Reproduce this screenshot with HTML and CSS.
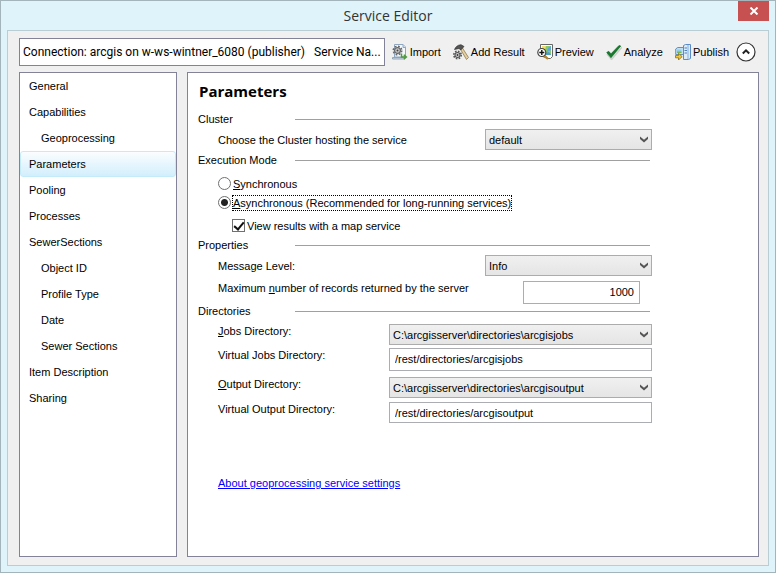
FILE: index.html
```html
<!DOCTYPE html>
<html lang="en">
<head>
    <meta charset="UTF-8">
    <meta name="viewport" content="width=device-width, initial-scale=1.0">
    <title>Service Editor</title>
    <link rel="stylesheet" href="styles.css">
</head>
<body>
    <!-- shared arrow for the drop-downs -->
    <svg class="defs" width="0" height="0" aria-hidden="true">
        <symbol id="arrow" viewBox="0 0 8 7">
            <path d="M0 0.500v2.500L4 6.500l4-3.500V0.500L4 3.800z" fill="#555"/>
        </symbol>
    </svg>

    <div class="window">
        <header class="titlebar">
            <h1>Service Editor</h1>
            <button class="close" aria-label="Close">
                <svg width="10" height="8" viewBox="0 0 10 8"><path d="M1.5 0.5l7 7M8.5 0.5l-7 7" stroke="#fff" stroke-width="2"/></svg>
            </button>
        </header>

        <div class="client">
            <div class="toolbar">
                <div class="connection">
                    <span>Connection: arcgis on w-ws-wintner_6080 (publisher)</span>
                    <span>Service Na...</span>
                </div>
                <button class="tool">
                    <svg width="16" height="16" viewBox="0 0 16 16">
                        <path d="M2.500 0.500h8.500l2.500 2.500v10h-11z" fill="#f4f8fc" stroke="#8ea6c0"/>
                        <path d="M11 0.500v3h2.500" fill="#cfe0f0" stroke="#8ea6c0"/>
                        <path d="M0.500 13.500h12v1.500h-12z" fill="#cfdcea" stroke="#8595a8" stroke-width=".8"/>
                        <circle cx="5.500" cy="6.500" r="4.200" fill="none" stroke="#666" stroke-width="1.600" stroke-dasharray="1.800 1.500"/>
                        <circle cx="5.500" cy="6.500" r="2.900" fill="#ccc" stroke="#666" stroke-width="1.200"/>
                        <circle cx="5.500" cy="6.500" r="1" fill="#444"/>
                        <path d="M9.500 9.500v3.500h4M11.800 10.800l2.600 2.200-2.600 2.300" fill="none" stroke="#4f9a3c" stroke-width="1.500"/>
                    </svg>
                    Import
                </button>
                <button class="tool">
                    <svg width="16" height="16" viewBox="0 0 16 16">
                        <path d="M7 4.500l1.800-1.500 6.700 10.500-2 2z" fill="#e6cfa0" stroke="#8f7a50" stroke-width=".8"/>
                        <path d="M1.500 5.500C2.500 3 4.500 1 8 0.700l3 1.800-3.200 3.500-1.800-1.500z" fill="#555" stroke="#222" stroke-width=".6"/>
                        <circle cx="4.500" cy="11" r="3.700" fill="none" stroke="#555" stroke-width="1.600" stroke-dasharray="1.600 1.300"/>
                        <circle cx="4.500" cy="11" r="2.500" fill="#ccc" stroke="#555" stroke-width="1.100"/>
                        <circle cx="4.500" cy="11" r=".9" fill="#333"/>
                    </svg>
                    Add Result
                </button>
                <button class="tool">
                    <svg width="16" height="16" viewBox="0 0 16 16">
                        <path d="M3.500 0.500h12v12l-2 2h-3l-7-3z" fill="#fff" stroke="#666"/>
                        <path d="M5 2h9v9H5z" fill="#8cc96b"/>
                        <path d="M5 2h4l-1 4-3 1z" fill="#f0df70"/>
                        <path d="M14 2v4l-4 2 1-4z" fill="#5fa6dc"/>
                        <path d="M8 9l4-1 2 3H9z" fill="#4c9cc9"/>
                        <path d="M7.500 11.500l3.500 3.500" stroke="#b5842e" stroke-width="2.200"/>
                        <circle cx="4.800" cy="8.500" r="4" fill="#fff" stroke="#444" stroke-width="1.200"/>
                        <path d="M4.800 6v5M2.300 8.500h5" stroke="#111" stroke-width="1.400"/>
                    </svg>
                    Preview
                </button>
                <button class="tool">
                    <svg width="16" height="16" viewBox="0 0 16 16">
                        <path d="M1 10l4.500 5.500L16 3" fill="none" stroke="#c9cfc9" stroke-width="1.500"/>
                        <path d="M0.700 8.500l2-1.200 2.300 2.500L13 1.500 14.800 2 5 13.800z" fill="#157a2b" stroke="#0e6321" stroke-width=".6"/>
                    </svg>
                    Analyze
                </button>
                <button class="tool">
                    <svg width="16" height="16" viewBox="0 0 16 16">
                        <path d="M0.700 5l2-1.500h5.800v7H0.700z" fill="#bfe0f5" stroke="#5787b5" stroke-width=".9"/>
                        <path d="M2 5.500h4.500v3.500H2z" fill="#8fd0e8"/>
                        <path d="M2 7.500h4.500v1.500H2z" fill="#79b84e"/>
                        <path d="M8.500 1.500l2-1h5v14l-2 1h-5z" fill="#dcebfa" stroke="#5b8cc5"/>
                        <path d="M13 1v14" stroke="#84aee0"/>
                        <path d="M9.500 4h2.500M9.500 6.500h2.500M9.500 9h2.500" stroke="#4c7fb8"/>
                        <path d="M0.500 11.500h3V9.300l3.700 3.300L3.500 16v-2.200h-3z" fill="#f1c83c" stroke="#8a6d14" stroke-width=".8"/>
                    </svg>
                    Publish
                </button>
                <button class="collapse" aria-label="Collapse">
                    <svg width="20" height="20" viewBox="0 0 20 20">
                        <circle cx="10" cy="10" r="9" fill="#fff" stroke="#333" stroke-width="1.200"/>
                        <path d="M6.800 11.500L10 8.300l3.200 3.200" fill="none" stroke="#222" stroke-width="2"/>
                    </svg>
                </button>
            </div>

            <div class="content">
                <nav class="sidebar">
                    <a href="#">General</a>
                    <a href="#">Capabilities</a>
                    <a href="#" class="sub">Geoprocessing</a>
                    <a href="#" class="active">Parameters</a>
                    <a href="#">Pooling</a>
                    <a href="#">Processes</a>
                    <a href="#">SewerSections</a>
                    <a href="#" class="sub">Object ID</a>
                    <a href="#" class="sub">Profile Type</a>
                    <a href="#" class="sub">Date</a>
                    <a href="#" class="sub">Sewer Sections</a>
                    <a href="#">Item Description</a>
                    <a href="#">Sharing</a>
                </nav>

                <main class="panel">
                    <h2>Parameters</h2>
                    <form class="form">
                        <h3>Cluster</h3>
                        <div class="row center">
                            <label for="cluster">Choose the Cluster hosting the service</label>
                            <span class="select">
                                <select id="cluster"><option>default</option></select>
                                <svg width="8" height="7"><use href="#arrow"/></svg>
                            </span>
                        </div>

                        <h3>Execution Mode</h3>
                        <div class="modes">
                            <label class="check"><input type="radio" name="mode"><span><u>S</u>ynchronous</span></label>
                            <label class="check"><input type="radio" name="mode" checked><span class="focused"><u>A</u>synchronous (Recommended for long-running services)</span></label>
                            <label class="check nested"><input type="checkbox" checked><span>View results with a map service</span></label>
                        </div>

                        <h3>Properties</h3>
                        <div class="row center">
                            <label for="level">Message Level:</label>
                            <span class="select">
                                <select id="level"><option>Info</option></select>
                                <svg width="8" height="7"><use href="#arrow"/></svg>
                            </span>
                        </div>
                        <div class="row records">
                            <label for="max">Maximum <u>n</u>umber of records returned by the server</label>
                            <input type="text" id="max" class="number" value="1000">
                        </div>

                        <h3 class="tight">Directories</h3>
                        <div class="row">
                            <label for="jobs"><u>J</u>obs Directory:</label>
                            <span class="select wide">
                                <select id="jobs"><option>C:\arcgisserver\directories\arcgisjobs</option></select>
                                <svg width="8" height="7"><use href="#arrow"/></svg>
                            </span>
                        </div>
                        <div class="row">
                            <label for="vjobs">Virtual Jobs Directory:</label>
                            <input type="text" id="vjobs" class="wide" value="/rest/directories/arcgisjobs">
                        </div>
                        <div class="row output">
                            <label for="output"><u>O</u>utput Directory:</label>
                            <span class="select wide">
                                <select id="output"><option>C:\arcgisserver\directories\arcgisoutput</option></select>
                                <svg width="8" height="7"><use href="#arrow"/></svg>
                            </span>
                        </div>
                        <div class="row">
                            <label for="voutput">Virtual Output Directory:</label>
                            <input type="text" id="voutput" class="wide short" value="/rest/directories/arcgisoutput">
                        </div>

                        <a href="#" class="about">About geoprocessing service settings</a>
                    </form>
                </main>
            </div>
        </div>
    </div>
</body>
</html>
```
FILE: styles.css
```css
* {
    box-sizing: border-box;
}

body {
    margin: 0;
    font-family: "Liberation Sans", Arial, sans-serif;
    font-size: 11px;
    line-height: 14px;
    color: #000;
}

button, input, select {
    font: inherit;
    color: inherit;
    margin: 0;
}

.defs {
    position: absolute;
}

/* window frame */
.window {
    display: flex;
    flex-direction: column;
    min-height: 100vh;
    padding: 0 6px 6px;
    background: #dff3fa;
    border: 1px solid #a3b5bb;
}

.titlebar {
    display: grid;
    grid-template-columns: 1fr auto 1fr;
    align-items: center;
    height: 29px;
}

.titlebar h1 {
    grid-column: 2;
    margin: 0;
    font-family: "Open Sans", sans-serif;
    font-size: 14px;
    font-weight: normal;
    line-height: 20px;
    color: #333;
}

.close {
    justify-self: end;
    align-self: start;
    display: flex;
    align-items: center;
    justify-content: center;
    width: 31px;
    height: 20px;
    padding: 0;
    border: none;
    background: #c75050;
}

.client {
    flex: 1;
    display: flex;
    flex-direction: column;
    gap: 6px;
    padding: 7px 9px 8px 11px;
    background: #f0f0f0;
    border: 1px solid #b9ced4;
}

/* toolbar */
.toolbar {
    display: flex;
    align-items: center;
    gap: 12px;
    margin-right: 3px;
}

.connection {
    flex: 1;
    display: flex;
    gap: 9px;
    min-width: 0;
    margin-right: -5px;
    padding: 0 3px;
    font-family: Roboto, sans-serif;
    font-size: 12px;
    line-height: 26px;
    white-space: nowrap;
    background: #fff;
    border: 1px solid #828399;
}

.tool {
    display: flex;
    align-items: center;
    gap: 2px;
    padding: 0;
    border: none;
    background: none;
    white-space: nowrap;
}

.collapse {
    display: flex;
    padding: 0;
    margin-left: -5px;
    border: none;
    background: none;
}

/* panels */
.content {
    flex: 1;
    display: flex;
    gap: 10px;
}

.sidebar {
    width: 158px;
    background: #fff;
    border: 1px solid #828399;
}

.sidebar a {
    display: block;
    padding-left: 8px;
    line-height: 24px;
    color: #000;
    text-decoration: none;
    border: 1px solid transparent;
}

.sidebar .sub {
    padding-left: 20px;
}

.sidebar .active {
    background: linear-gradient(#fbfdff, #d2effc);
    border-color: #c4ebfa;
    border-radius: 3px;
}

.panel {
    flex: 1;
    padding: 8px 10px;
    background: #fff;
    border: 1px solid #828399;
}

.panel h2 {
    margin: 0 0 11px 1px;
    font-family: "Open Sans", sans-serif;
    font-size: 15px;
    line-height: 20px;
}

.form {
    max-width: 454px;
}

/* section titles with a rule to the right */
.form h3 {
    display: grid;
    grid-template-columns: 97px 1fr;
    align-items: center;
    margin: 3px 2px 3px 0;
    font-size: 11px;
    font-weight: normal;
}

.form h3::after {
    content: "";
    border-top: 1px solid #a0a0a0;
}

.form .tight {
    margin: 0 2px 6px 0;
}

.row {
    display: flex;
    justify-content: space-between;
    margin: 0 0 3px 20px;
}

.center {
    align-items: center;
}

.records {
    margin: 5px 12px 0 20px;
}

.output {
    margin: 6px 0 4px 20px;
}

.select {
    position: relative;
    width: 167px;
}

.select select {
    display: block;
    appearance: none;
    width: 100%;
    height: 21px;
    padding: 0 3px;
    border: 1px solid #acacac;
    border-radius: 0;
    background: linear-gradient(#f0f0f0, #e5e5e5);
}

.select svg {
    position: absolute;
    right: 4px;
    top: 7px;
    pointer-events: none;
}

.row input {
    height: 23px;
    padding: 0 5px 2px;
    border: 1px solid #abadb3;
    background: #fff;
}

.row .number {
    width: 117px;
    text-align: right;
}

.row .wide {
    width: 263px;
}

.row .short {
    height: 21px;
    padding-bottom: 0;
}

.modes {
    padding: 4px 0 0 20px;
}

.check {
    display: flex;
    align-items: center;
    gap: 2px;
    height: 19px;
}

.nested {
    margin: 4px 0 0 14px;
}

.check input {
    appearance: none;
    width: 13px;
    height: 13px;
    border: 1px solid #707070;
    background: #fff;
}

.check input[type="radio"] {
    border-radius: 50%;
}

.check input[type="radio"]:checked {
    background: radial-gradient(#222 0 3px, #fff 4px);
}

.check input[type="checkbox"] {
    display: grid;
    place-items: center;
}

.check input[type="checkbox"]:checked::after {
    content: "";
    width: 4px;
    height: 8px;
    margin-bottom: 2px;
    border: solid #111;
    border-width: 0 2px 2px 0;
    transform: rotate(40deg);
}

.focused {
    outline: 1px dotted #000;
}

.about {
    display: inline-block;
    margin: 50px 0 0 20px;
    color: #0000ff;
}
```
